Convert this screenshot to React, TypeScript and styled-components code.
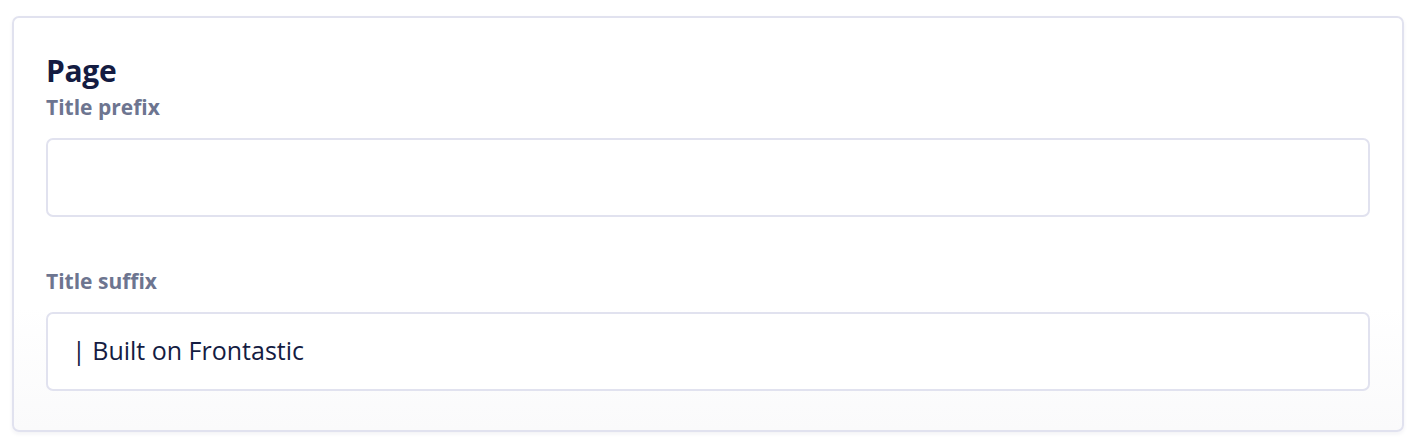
import React from "react";
import styled, { createGlobalStyle } from "styled-components";

const Global = createGlobalStyle`
  html, body { margin: 0; padding: 0; background: #ffffff; }
  body { font-family: "Open Sans", Lato, sans-serif; -webkit-font-smoothing: antialiased; font-variant-ligatures: none; }
  * { box-sizing: border-box; }
`;

const Page = styled.div`
  padding: 16px 12px 8px 12px;
`;

const Card = styled.section`
  border: 2px solid #e1e2ef;
  border-radius: 7px;
  background: linear-gradient(to bottom, #ffffff 70%, #fafafb 100%);
  box-shadow: 0 2px 4px rgba(30, 35, 80, 0.06);
  padding: 35px 32px 38px 32px;
  height: 416px;
  display: flex;
  flex-direction: column;
`;

const Heading = styled.h2`
  margin: 0;
  font-size: 30px;
  line-height: 36px;
  font-weight: 700;
  color: #141c42;
  letter-spacing: -0.3px;
`;

const Field = styled.div<{ $gap?: number }>`
  display: flex;
  flex-direction: column;
  margin-top: ${(p) => p.$gap ?? 0}px;
`;

const Label = styled.label`
  font-size: 21px;
  line-height: 26px;
  font-weight: 700;
  color: #6d7590;
  margin-bottom: 18px;
`;

const Input = styled.input`
  height: 79px;
  width: 100%;
  border: 2px solid #e1e2ef;
  border-radius: 7px;
  background: #ffffff;
  padding: 0 24px 3px 24px;
  font-family: inherit;
  font-variant-ligatures: none;
  font-size: 25px;
  color: #141c42;
  outline: none;
`;

export default function App() {
  return (
    <>
      <Global />
      <Page>
        <Card>
          <Heading>Page</Heading>
          <Field $gap={5}>
            <Label>Title prefix</Label>
            <Input defaultValue="" />
          </Field>
          <Field $gap={51}>
            <Label>Title suffix</Label>
            <Input defaultValue="| Built on Frontastic" />
          </Field>
        </Card>
      </Page>
    </>
  );
}
